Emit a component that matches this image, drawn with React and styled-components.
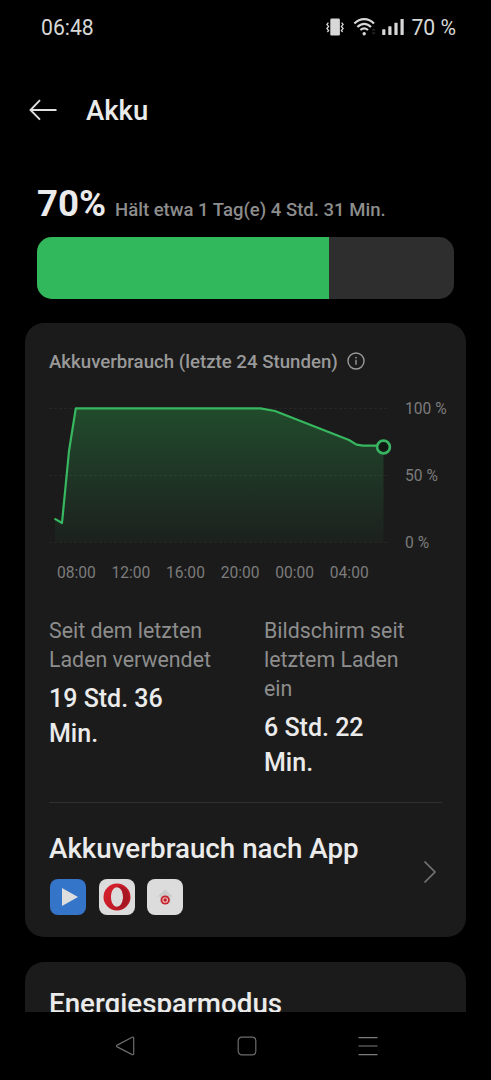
import React from "react";
import styled, { createGlobalStyle } from "styled-components";

const percentLabels = ["100 %", "50 %", "0 %"];
const timeLabels = ["08:00", "12:00", "16:00", "20:00", "00:00", "04:00"];

const stats = [
    { label: "Seit dem letzten Laden verwendet", value: "19 Std. 36 Min." },
    { label: "Bildschirm seit letztem Laden ein", value: "6 Std. 22 Min." },
];

function StatusBar() {
    return (
        <StatusContainer>
            <StatusText>06:48</StatusText>
            <StatusIcons>
                <svg width="18" height="18" viewBox="0 0 18 18" fill="none">
                    <rect x="4.3" y="0.6" width="9.6" height="17" rx="1.4" fill="#d8d8d8" />
                    <path d="M2.4 4.6L0.9 6.4L2.6 8.4L0.9 10.6L2.6 12.6L1.4 14" stroke="#d8d8d8" strokeWidth="1.3" />
                    <path d="M15.6 4.6L17.1 6.4L15.4 8.4L17.1 10.6L15.4 12.6L16.6 14" stroke="#d8d8d8" strokeWidth="1.3" />
                </svg>
                <svg width="24" height="18" viewBox="0 0 24 18" fill="none">
                    <path d="M1.4 5.6C7 -0.3 15.4 -0.3 21 5.6" stroke="#d8d8d8" strokeWidth="2.2" />
                    <path d="M4.4 9C8.6 4.7 13.8 4.7 18 9" stroke="#d8d8d8" strokeWidth="2.2" />
                    <path d="M7.4 12.1C9.7 9.9 12.7 9.9 15 12.1" stroke="#d8d8d8" strokeWidth="2.1" />
                    <circle cx="11.2" cy="15.8" r="1.7" fill="#d8d8d8" />
                    <path d="M18.6 12.6L20.6 10.6L22.6 12.6ZM18.6 14.6L20.6 16.6L22.6 14.6Z" fill="#303030" />
                </svg>
                <svg width="23" height="18" viewBox="0 0 23 18" fill="#d8d8d8">
                    <rect x="0.2" y="11.2" width="3.2" height="5.8" rx="0.6" />
                    <rect x="6.3" y="8.3" width="3.2" height="8.7" rx="0.6" />
                    <rect x="12.4" y="4.8" width="3.2" height="12.2" rx="0.6" />
                    <rect x="18.5" y="1" width="3.2" height="16" rx="0.6" />
                </svg>
                <StatusText>70 %</StatusText>
            </StatusIcons>
        </StatusContainer>
    );
}

function UsageChart() {
    return (
        <ChartGrid>
            <Chart width="341" height="150" viewBox="0 0 341 150" fill="none">
                <defs>
                    <linearGradient id="usage" x1="0" y1="8" x2="0" y2="142" gradientUnits="userSpaceOnUse">
                        <stop offset="0" stopColor="#214b2b" />
                        <stop offset="0.5" stopColor="#1f3526" />
                        <stop offset="1" stopColor="#1c211d" />
                    </linearGradient>
                </defs>
                <path d="M6 119L13 123L20 51L27 8H211Q219 8.500 226 11L300 40Q307 45.600 314 45.600H334.500V142H6Z" fill="url(#usage)" />
                <path d="M0 8.500H340M0 75.500H340M0 142.500H340" stroke="#fff" strokeOpacity="0.05" strokeDasharray="3 2" />
                <path d="M5.500 118.600L13 123L20 51L26.800 8.300H211.500L226 11L300 40L307.500 44.600L314 45.700H328.500" stroke="#37b75f" strokeWidth="2.2" strokeLinejoin="round" />
                <circle cx="334.500" cy="47" r="6.400" fill="#121813" stroke="#37b362" strokeWidth="2.700" />
            </Chart>
            <PercentLabels>
                {percentLabels.map((label) => (
                    <span key={label}>{label}</span>
                ))}
            </PercentLabels>
            <TimeLabels>
                {timeLabels.map((label) => (
                    <span key={label}>{label}</span>
                ))}
            </TimeLabels>
        </ChartGrid>
    );
}

function AppIcons() {
    return (
        <AppIconRow>
            <AppIcon $color="#3474c9">
                <svg width="36" height="36" viewBox="0 0 36 36">
                    <path d="M12 9L28 18L12 27Z" fill="#dedede" />
                </svg>
            </AppIcon>
            <AppIcon $color="#dcdcdc">
                <svg width="36" height="36" viewBox="0 0 36 36">
                    <defs>
                        <linearGradient id="opera" x1="5" y1="5" x2="31" y2="31" gradientUnits="userSpaceOnUse">
                            <stop offset="0" stopColor="#d8232f" />
                            <stop offset="0.55" stopColor="#c51c28" />
                            <stop offset="1" stopColor="#ae1822" />
                        </linearGradient>
                    </defs>
                    <path
                        fill="url(#opera)"
                        fillRule="evenodd"
                        d="M18 4.500a13.500 13.500 0 1 0 0 27a13.500 13.500 0 1 0 0-27ZM18 8.300c3.600 0 6 4.300 6 9.700s-2.400 9.700-6 9.700s-6-4.300-6-9.700s2.400-9.700 6-9.700Z"
                    />
                    <path d="M18 8.300C21 6.400 25 7 27.800 11C30.400 15 30.400 21 27.800 25C25 29 21 29.600 18 27.700C21.600 27.700 24 23.400 24 18S21.600 8.300 18 8.300Z" fill="#8e151e" fillOpacity="0.45" />
                </svg>
            </AppIcon>
            <AppIcon $color="#dcdcdc">
                <svg width="36" height="36" viewBox="0 0 36 36" fill="none">
                    <path d="M10.500 17.500L18 10.500L26 17.500H23.500V24H13V17.500Z" fill="#cbcbcb" />
                    <circle cx="18.200" cy="21" r="4.600" fill="#c8202b" />
                    <circle cx="18.200" cy="21" r="2.300" stroke="#e6bcbc" strokeWidth="1.100" />
                </svg>
            </AppIcon>
        </AppIconRow>
    );
}

function NavigationBar() {
    return (
        <Navigation>
            <svg width="20" height="20" viewBox="0 0 20 20" fill="none" stroke="#6c6c6c" strokeWidth="1.2">
                <path d="M17.200 1.300L2.200 9.100Q0.900 10 2.200 10.900L17.200 18.600Q18.700 19.100 18.700 17.600V2.300Q18.700 0.800 17.200 1.300Z" />
            </svg>
            <svg width="20" height="20" viewBox="0 0 20 20" fill="none" stroke="#6c6c6c" strokeWidth="1.2">
                <rect x="1.200" y="1.200" width="17.600" height="17.600" rx="3.500" />
            </svg>
            <svg width="20" height="20" viewBox="0 0 20 20" fill="none" stroke="#7c7c7c" strokeWidth="1.2">
                <path d="M0.500 1.600H19.500M0.500 10H19.500M0.500 18.600H19.500" />
            </svg>
        </Navigation>
    );
}

function App() {
    return (
        <>
            <GlobalStyle />
            <Screen>
                <StatusBar />
                <Header>
                    <svg width="29" height="22" viewBox="0 0 29 22" fill="none" stroke="#dfdfdf" strokeWidth="1.9">
                        <path d="M12 1.200L2.500 11L12 20.600M2.500 11H28.500" />
                    </svg>
                    <h1>Akku</h1>
                </Header>
                <Content>
                    <Level>
                        <LevelPercent>70%</LevelPercent>
                        <LevelRemaining>Hält etwa 1 Tag(e) 4 Std. 31 Min.</LevelRemaining>
                    </Level>
                    <BatteryBar>
                        <BatteryFill $level={70} />
                    </BatteryBar>
                    <Card>
                        <CardTitle>
                            <span>Akkuverbrauch (letzte 24 Stunden)</span>
                            <svg width="18" height="18" viewBox="0 0 18 18" fill="none">
                                <circle cx="9" cy="9" r="8" stroke="#999" strokeWidth="1.400" />
                                <path d="M9 7.800V12.800" stroke="#999" strokeWidth="1.400" />
                                <circle cx="9" cy="5.600" r="0.900" fill="#999" />
                            </svg>
                        </CardTitle>
                        <UsageChart />
                        <Stats>
                            {stats.map((stat) => (
                                <div key={stat.label}>
                                    <StatLabel>{stat.label}</StatLabel>
                                    <StatValue>{stat.value}</StatValue>
                                </div>
                            ))}
                        </Stats>
                        <AppUsage>
                            <div>
                                <RowTitle>Akkuverbrauch nach App</RowTitle>
                                <AppIcons />
                            </div>
                            <Chevron width="14" height="24" viewBox="0 0 14 24">
                                <path d="M1.500 1.500L12 12L1.500 22.500" />
                            </Chevron>
                        </AppUsage>
                    </Card>
                    <Card>
                        <SavingRow>Energiesparmodus</SavingRow>
                    </Card>
                </Content>
                <NavigationBar />
            </Screen>
        </>
    );
}

export default App;

const GlobalStyle = createGlobalStyle`
    * {
        box-sizing: border-box;
        margin: 0;
        padding: 0;
    }

    body {
        background: #000;
        font-family: Roboto, "Liberation Sans", sans-serif;
        overflow: hidden;
    }

    svg {
        display: block;
        flex: none;
    }
`;

const Screen = styled.div`
    width: 491px;
    height: 1080px;
    display: flex;
    flex-direction: column;
    background: #000;
    color: #ebebeb;
`;

const StatusContainer = styled.header`
    height: 56px;
    flex: none;
    display: flex;
    align-items: center;
    justify-content: space-between;
    padding: 0 35px 0 41px;
`;

const StatusText = styled.span`
    font-size: 21.2px;
    line-height: 24px;
    color: #d8d8d8;
    white-space: nowrap;
`;

const StatusIcons = styled.div`
    display: flex;
    align-items: center;
    gap: 5px;

    svg {
        margin-top: -2px;
    }

    svg:first-child {
        margin-right: 4px;
    }

    svg:nth-child(3) {
        margin-right: 1px;
    }
`;

const Header = styled.div`
    height: 108px;
    flex: none;
    display: flex;
    align-items: center;
    gap: 29px;
    padding-left: 28px;

    h1 {
        padding-top: 2px;
        font-size: 27.5px;
        line-height: 32px;
        font-weight: 500;
    }
`;

const Content = styled.main`
    flex: 1;
    min-height: 0;
    overflow: hidden;
    padding: 18px 25px 0;
`;

const Level = styled.div`
    height: 55px;
    display: flex;
    align-items: baseline;
    gap: 9px;
    padding-left: 12px;
    white-space: nowrap;
`;

const LevelPercent = styled.span`
    font-size: 36.6px;
    line-height: 44px;
    font-weight: 700;
`;

const LevelRemaining = styled.span`
    font-size: 18.55px;
    font-weight: 500;
    color: #8d8d8d;
`;

const BatteryBar = styled.div`
    height: 62px;
    margin: 0 12px 24px;
    border-radius: 15px;
    background: #2e2e2e;
    overflow: hidden;
`;

const BatteryFill = styled.div`
    width: ${({ $level }) => $level}%;
    height: 100%;
    background: #31b85c;
`;

const Card = styled.section`
    padding: 0 24px;
    margin-bottom: 25px;
    border-radius: 19px;
    background: #1b1b1b;
    overflow: hidden;
`;

const CardTitle = styled.h2`
    display: flex;
    align-items: center;
    gap: 9px;
    height: 77px;
    font-size: 18.65px;
    font-weight: 500;
    color: #999;
    white-space: nowrap;

    svg {
        margin-top: -1px;
    }
`;

const ChartGrid = styled.div`
    display: grid;
    grid-template-columns: 341px 1fr;
    grid-template-rows: 150px 46px;
    column-gap: 15px;
    white-space: nowrap;
`;

const Chart = styled.svg`
    overflow: visible;
`;

const PercentLabels = styled.div`
    display: flex;
    flex-direction: column;
    justify-content: space-between;
    height: 152px;
    font-size: 15.6px;
    line-height: 18px;
    color: #7c7c7c;
`;

const TimeLabels = styled.div`
    display: grid;
    grid-template-columns: repeat(6, 54.6px);
    text-align: center;
    font-size: 15.6px;
    line-height: 47px;
    color: #7c7c7c;
`;

const Stats = styled.div`
    display: grid;
    grid-template-columns: 168px 160px;
    column-gap: 47px;
    height: 207px;
    padding-top: 20px;
    border-bottom: 1px solid #303030;
`;

const StatLabel = styled.p`
    font-size: 21.35px;
    line-height: 29px;
    color: #8d8d8d;
`;

const StatValue = styled.p`
    width: 130px;
    margin-top: 7px;
    font-size: 25px;
    line-height: 35px;
    font-weight: 500;
`;

const AppUsage = styled.div`
    display: flex;
    align-items: center;
    justify-content: space-between;
    height: 134px;
    padding: 8px 5px 0 0;
`;

const RowTitle = styled.h3`
    font-size: 27.75px;
    line-height: 32px;
    font-weight: 500;
    white-space: nowrap;
`;

const Chevron = styled.svg`
    margin-bottom: 5px;
    fill: none;
    stroke: #737373;
    stroke-width: 1.7;
`;

const AppIconRow = styled.div`
    display: flex;
    gap: 12.500px;
    margin: 14px 0 0 1px;
`;

const AppIcon = styled.div`
    width: 36px;
    height: 36px;
    border-radius: 8px;
    background: ${({ $color }) => $color};
    overflow: hidden;
`;

const SavingRow = styled(RowTitle)`
    height: 83px;
    line-height: 83px;
`;

const Navigation = styled.nav`
    height: 68px;
    flex: none;
    display: flex;
    align-items: center;
    justify-content: space-between;
    padding: 0 113px 0 115px;
`;
